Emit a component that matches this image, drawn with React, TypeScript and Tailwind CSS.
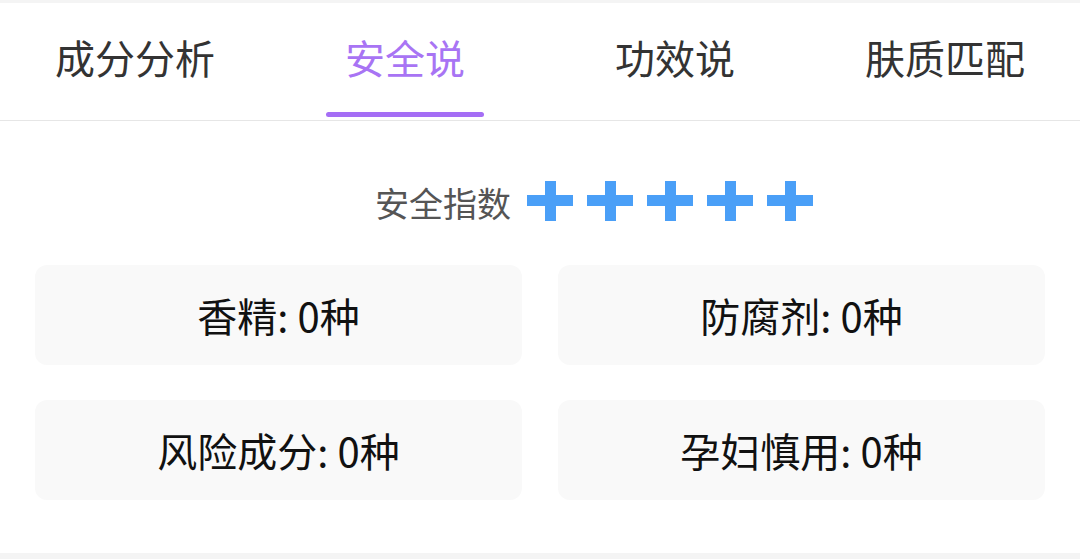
const tabs = ["成分分析", "安全说", "功效说", "肤质匹配"];
const items = ["香精: 0种", "防腐剂: 0种", "风险成分: 0种", "孕妇慎用: 0种"];

function Plus() {
  return (
    <svg width="46" height="40" viewBox="0 0 46 40" className="shrink-0">
      <rect x="18" y="0" width="11" height="40" fill="#4a9ff7" />
      <rect x="0" y="14" width="46" height="11" fill="#4a9ff7" />
    </svg>
  );
}

export default function App() {
  return (
    <div
      className="w-[1080px] h-[559px] bg-white flex flex-col overflow-hidden"
      style={{ fontFamily: '"Noto Sans CJK SC", "Noto Sans", sans-serif' }}
    >
      <div className="h-[3px] bg-[#f4f4f4]" />
      {/* tabs */}
      <div className="h-[118px] grid grid-cols-4 border-b border-[#e6e6e6]">
        {tabs.map((t, i) => (
          <div key={t} className="relative flex justify-center pt-[30px]">
            <span
              className={
                "text-[40px] leading-[48px] " +
                (i === 1 ? "text-[#a874f4]" : "text-[#333333]")
              }
            >
              {t}
            </span>
            {i === 1 && (
              <div className="absolute bottom-[3px] left-1/2 -translate-x-1/2 w-[158px] h-[5px] rounded-full bg-[#a56ef5]" />
            )}
          </div>
        ))}
      </div>

      {/* safety index */}
      <div className="flex items-center justify-center gap-[14px] mt-[58px] pl-[108px]">
        <span className="text-[34px] leading-[40px] text-[#555555] mr-[2px] mt-[4px]">安全指数</span>
        <div className="flex gap-[14px]">
          {[0, 1, 2, 3, 4].map((n) => (
            <Plus key={n} />
          ))}
        </div>
      </div>

      {/* cards */}
      <div className="grid grid-cols-2 gap-x-[36px] gap-y-[35px] px-[35px] mt-[42px]">
        {items.map((t) => (
          <div
            key={t}
            className="h-[100px] rounded-[12px] bg-[#f9f9f9] flex items-center justify-center text-[40px] text-[#111111]"
          >
            {t}
          </div>
        ))}
      </div>

      <div className="flex-1" />
      <div className="h-[6px] bg-[#f4f4f4]" />
    </div>
  );
}
